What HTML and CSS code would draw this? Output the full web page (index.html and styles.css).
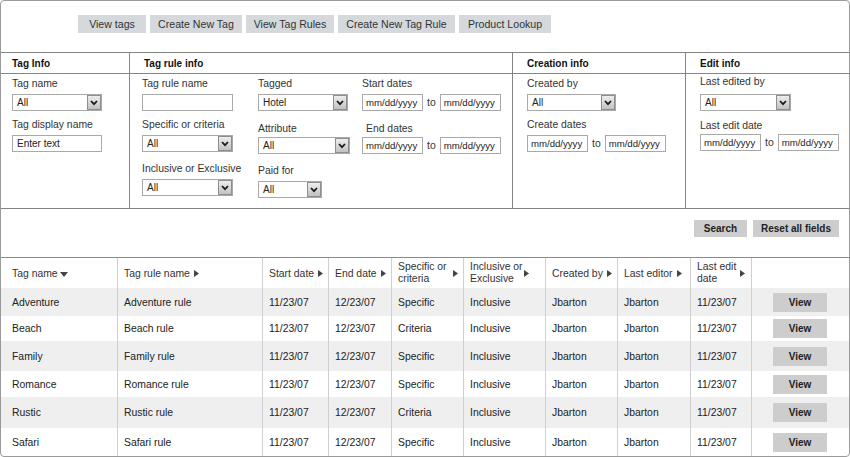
FILE: index.html
```html
<!DOCTYPE html>
<html lang="en">
<head>
<meta charset="utf-8">
<title>Tag rules</title>
<link rel="stylesheet" href="styles.css">
</head>
<body>
<div class="frame">
  <nav class="nav">
    <a class="nav-btn w68">View tags</a>
    <a class="nav-btn w92">Create New Tag</a>
    <a class="nav-btn w88">View Tag Rules</a>
    <a class="nav-btn w117">Create New Tag Rule</a>
    <a class="nav-btn w92">Product Lookup</a>
  </nav>

  <section class="filters">
    <div class="fcol fcol-tag">
      <div class="fhead">Tag Info</div>
      <div class="fbody">
        <div class="field">
          <label>Tag name</label>
          <div class="select w90"><span>All</span><span class="arrow"><svg width="8" height="6" viewBox="0 0 8 6"><path d="M1 1 L4 4.2 L7 1" fill="none" stroke="#1a1a1a" stroke-width="1.8"/></svg></span></div>
        </div>
        <div class="field">
          <label>Tag display name</label>
          <div class="input w90">Enter text</div>
        </div>
      </div>
    </div>

    <div class="fcol fcol-rule">
      <div class="fhead">Tag rule info</div>
      <div class="fbody rule-body">
        <div class="sub sub1">
          <div class="field">
            <label>Tag rule name</label>
            <div class="input w91"></div>
          </div>
          <div class="field">
            <label>Specific or criteria</label>
            <div class="select w91"><span>All</span><span class="arrow"><svg width="8" height="6" viewBox="0 0 8 6"><path d="M1 1 L4 4.2 L7 1" fill="none" stroke="#1a1a1a" stroke-width="1.8"/></svg></span></div>
          </div>
          <div class="field gap-md">
            <label>Inclusive or Exclusive</label>
            <div class="select w91"><span>All</span><span class="arrow"><svg width="8" height="6" viewBox="0 0 8 6"><path d="M1 1 L4 4.2 L7 1" fill="none" stroke="#1a1a1a" stroke-width="1.8"/></svg></span></div>
          </div>
        </div>
        <div class="sub sub2">
          <div class="field">
            <label>Tagged</label>
            <div class="select w90"><span>Hotel</span><span class="arrow"><svg width="8" height="6" viewBox="0 0 8 6"><path d="M1 1 L4 4.2 L7 1" fill="none" stroke="#1a1a1a" stroke-width="1.8"/></svg></span></div>
          </div>
          <div class="field gap-lg">
            <label class="tight">Attribute</label>
            <div class="select w92"><span>All</span><span class="arrow"><svg width="8" height="6" viewBox="0 0 8 6"><path d="M1 1 L4 4.2 L7 1" fill="none" stroke="#1a1a1a" stroke-width="1.8"/></svg></span></div>
          </div>
          <div class="field gap-md">
            <label>Paid for</label>
            <div class="select w64"><span>All</span><span class="arrow"><svg width="8" height="6" viewBox="0 0 8 6"><path d="M1 1 L4 4.2 L7 1" fill="none" stroke="#1a1a1a" stroke-width="1.8"/></svg></span></div>
          </div>
        </div>
        <div class="sub sub3">
          <div class="field">
            <label>Start dates</label>
            <div class="range"><div class="input date">mm/dd/yyyy</div><span class="to">to</span><div class="input date">mm/dd/yyyy</div></div>
          </div>
          <div class="field gap-lg">
            <label class="indent tight">End dates</label>
            <div class="range"><div class="input date">mm/dd/yyyy</div><span class="to">to</span><div class="input date">mm/dd/yyyy</div></div>
          </div>
        </div>
      </div>
    </div>

    <div class="fcol">
      <div class="fhead">Creation info</div>
      <div class="fbody">
        <div class="field">
          <label>Created by</label>
          <div class="select w89"><span>All</span><span class="arrow"><svg width="8" height="6" viewBox="0 0 8 6"><path d="M1 1 L4 4.2 L7 1" fill="none" stroke="#1a1a1a" stroke-width="1.8"/></svg></span></div>
        </div>
        <div class="field">
          <label>Create dates</label>
          <div class="range"><div class="input date">mm/dd/yyyy</div><span class="to">to</span><div class="input date">mm/dd/yyyy</div></div>
        </div>
      </div>
    </div>

    <div class="fcol">
      <div class="fhead">Edit info</div>
      <div class="fbody">
        <div class="field">
          <label class="loose">Last edited by</label>
          <div class="select w91"><span>All</span><span class="arrow"><svg width="8" height="6" viewBox="0 0 8 6"><path d="M1 1 L4 4.2 L7 1" fill="none" stroke="#1a1a1a" stroke-width="1.8"/></svg></span></div>
        </div>
        <div class="field gap-sm">
          <label class="tight">Last edit date</label>
          <div class="range"><div class="input date">mm/dd/yyyy</div><span class="to">to</span><div class="input date">mm/dd/yyyy</div></div>
        </div>
      </div>
    </div>
  </section>

  <div class="actions">
    <button class="act w53">Search</button>
    <button class="act w86">Reset all fields</button>
  </div>

  <div class="table">
    <div class="tr thead">
      <div>Tag name<svg class="tri-down" width="8" height="5" viewBox="0 0 8 5"><polygon points="0,0 8,0 4,5" fill="#444"/></svg></div>
      <div>Tag rule name<svg class="tri" width="5" height="7" viewBox="0 0 5 7"><polygon points="0,0 5,3.5 0,7" fill="#444"/></svg></div>
      <div>Start date<svg class="tri" width="5" height="7" viewBox="0 0 5 7"><polygon points="0,0 5,3.5 0,7" fill="#444"/></svg></div>
      <div>End date<svg class="tri" width="5" height="7" viewBox="0 0 5 7"><polygon points="0,0 5,3.5 0,7" fill="#444"/></svg></div>
      <div><span class="two">Specific or<br>criteria</span><svg class="tri tri-gap" width="5" height="7" viewBox="0 0 5 7"><polygon points="0,0 5,3.5 0,7" fill="#444"/></svg></div>
      <div><span class="two">Inclusive or<br>Exclusive</span><svg class="tri tri-tight" width="5" height="7" viewBox="0 0 5 7"><polygon points="0,0 5,3.5 0,7" fill="#444"/></svg></div>
      <div>Created by<svg class="tri" width="5" height="7" viewBox="0 0 5 7"><polygon points="0,0 5,3.5 0,7" fill="#444"/></svg></div>
      <div>Last editor<svg class="tri" width="5" height="7" viewBox="0 0 5 7"><polygon points="0,0 5,3.5 0,7" fill="#444"/></svg></div>
      <div><span class="two">Last edit<br>date</span><svg class="tri" width="5" height="7" viewBox="0 0 5 7"><polygon points="0,0 5,3.5 0,7" fill="#444"/></svg></div>
      <div></div>
    </div>
    <div class="tr row r1 alt">
      <div>Adventure</div><div>Adventure rule</div><div>11/23/07</div><div>12/23/07</div><div>Specific</div><div>Inclusive</div><div>Jbarton</div><div>Jbarton</div><div>11/23/07</div><div class="vcell"><button class="view">View</button></div>
    </div>
    <div class="tr row r2">
      <div>Beach</div><div>Beach rule</div><div>11/23/07</div><div>12/23/07</div><div>Criteria</div><div>Inclusive</div><div>Jbarton</div><div>Jbarton</div><div>11/23/07</div><div class="vcell"><button class="view">View</button></div>
    </div>
    <div class="tr row r3 alt">
      <div>Family</div><div>Family rule</div><div>11/23/07</div><div>12/23/07</div><div>Specific</div><div>Inclusive</div><div>Jbarton</div><div>Jbarton</div><div>11/23/07</div><div class="vcell"><button class="view">View</button></div>
    </div>
    <div class="tr row r4">
      <div>Romance</div><div>Romance rule</div><div>11/23/07</div><div>12/23/07</div><div>Specific</div><div>Inclusive</div><div>Jbarton</div><div>Jbarton</div><div>11/23/07</div><div class="vcell"><button class="view">View</button></div>
    </div>
    <div class="tr row r5 alt">
      <div>Rustic</div><div>Rustic rule</div><div>11/23/07</div><div>12/23/07</div><div>Criteria</div><div>Inclusive</div><div>Jbarton</div><div>Jbarton</div><div>11/23/07</div><div class="vcell"><button class="view">View</button></div>
    </div>
    <div class="tr row r6">
      <div>Safari</div><div>Safari rule</div><div>11/23/07</div><div>12/23/07</div><div>Specific</div><div>Inclusive</div><div>Jbarton</div><div>Jbarton</div><div>11/23/07</div><div class="vcell"><button class="view">View</button></div>
    </div>
  </div>
</div>
</body>
</html>
```

FILE: styles.css
```css
* { box-sizing: border-box; }
html, body { margin: 0; padding: 0; background: #fff; }
body {
  font-family: "Liberation Sans", Arial, sans-serif;
  font-size: 10.4px;
  color: #333;
}

.frame {
  width: 850px;
  height: 457px;
  border: 1px solid #9a9a9a;
  border-radius: 4px;
  overflow: hidden;
  display: flex;
  flex-direction: column;
}

/* top navigation */
.nav {
  height: 51px;
  flex: none;
  padding: 14px 0 0 77px;
  display: flex;
  gap: 4px;
  align-items: flex-start;
}
.nav-btn {
  height: 18px;
  background: #d5d9dc;
  color: #333;
  font-size: 10.6px;
  display: flex;
  align-items: center;
  justify-content: center;
}
.w68 { width: 68px; }
.w88 { width: 88px; }
.w89 { width: 89px; }
.w90 { width: 90px; }
.w91 { width: 91px; }
.w92 { width: 92px; }
.w117 { width: 117px; }
.w64 { width: 64px; }
.w53 { width: 53px; }
.w86 { width: 86px; }

/* filter panel */
.filters {
  flex: none;
  height: 157px;
  display: grid;
  grid-template-columns: 129px 383px 173px 1fr;
  border-top: 1px solid #858585;
  border-bottom: 1px solid #858585;
}
.fcol {
  border-right: 1px solid #858585;
  display: flex;
  flex-direction: column;
}
.fcol:last-child { border-right: 0; }
.fhead {
  height: 21px;
  flex: none;
  border-bottom: 1px solid #858585;
  padding-left: 14px;
  font-weight: bold;
  font-size: 10px;
  color: #111;
  display: flex;
  align-items: center;
}
.fbody {
  padding: 4px 0 0 14px;
  display: flex;
  flex-direction: column;
  gap: 8px;
}
.fcol-tag .fhead,
.fcol-tag .fbody { padding-left: 11px; }
.rule-body {
  flex-direction: row;
  gap: 0;
  padding-left: 12px;
}
.sub {
  display: flex;
  flex-direction: column;
  gap: 8px;
}
.sub1 { width: 116px; }
.sub2 { width: 104px; }
.gap-sm { margin-top: 1px; }
.gap-md { margin-top: 3px; }
.gap-lg { margin-top: 4px; }

.field label {
  display: block;
  line-height: 12px;
  margin-bottom: 4px;
  color: #333;
}
.field label.tight { margin-bottom: 2px; }
.field label.loose { margin-top: -2px; margin-bottom: 6px; }
.field label.indent { padding-left: 4px; }

.select {
  height: 17px;
  border: 1px solid #a9a9a9;
  background: #fff;
  display: flex;
  align-items: center;
  justify-content: space-between;
  padding-left: 4px;
  font-size: 10px;
  color: #222;
}
.select .arrow {
  width: 14px;
  height: 15px;
  border: 1px solid #8e8e8e;
  background: linear-gradient(#ededed, #c2c2c2);
  display: flex;
  align-items: center;
  justify-content: center;
}
.input {
  height: 17px;
  border: 1px solid #a9a9a9;
  background: #fff;
  padding-left: 4px;
  font-size: 10px;
  color: #222;
  display: flex;
  align-items: center;
}
.input.date {
  width: 61px;
  padding-left: 3px;
  font-size: 9.6px;
}
.range {
  display: flex;
  align-items: center;
  gap: 4px;
}
.to { font-size: 10.4px; color: #333; }

/* search actions */
.actions {
  flex: none;
  height: 48px;
  padding: 11px 10px 0 0;
  display: flex;
  justify-content: flex-end;
  align-items: flex-start;
  gap: 6px;
}
.act, .view {
  font-family: "Liberation Sans", Arial, sans-serif;
  font-weight: bold;
  font-size: 10px;
  color: #222;
  background: #cdcdcd;
  border: 0;
  padding: 0;
  margin: 0;
}
.act { height: 17px; }

/* results table */
.table {
  flex: 1;
  border-top: 1px solid #8a8a8a;
}
.tr {
  display: grid;
  grid-template-columns: 116px 145px 66px 63px 72px 82px 72px 73px 61px 1fr;
}
.tr > div {
  border-left: 1px solid #cfcfcf;
  padding-left: 6px;
  display: flex;
  align-items: center;
  color: #222;
}
.tr > div:first-child {
  border-left: 0;
  padding-left: 11px;
}
.thead { height: 30px; }
.thead > div { color: #333; }
.two { line-height: 12px; }
.tri { margin-left: 4px; flex: none; }
.tri-gap { margin-left: 6px; }
.tri-tight { margin-left: 1px; }
.tri-down { margin-left: 2px; margin-top: 2px; flex: none; }

.row.alt { background: #efefef; }
.r1 { height: 28px; }
.r2 { height: 25px; }
.r3 { height: 30px; }
.r4 { height: 26px; }
.r5 { height: 31px; }
.r6 { height: 28px; }
.tr > div.vcell {
  padding: 0;
  justify-content: center;
}
.view {
  width: 54px;
  height: 19px;
  margin-right: 1px;
}
```
